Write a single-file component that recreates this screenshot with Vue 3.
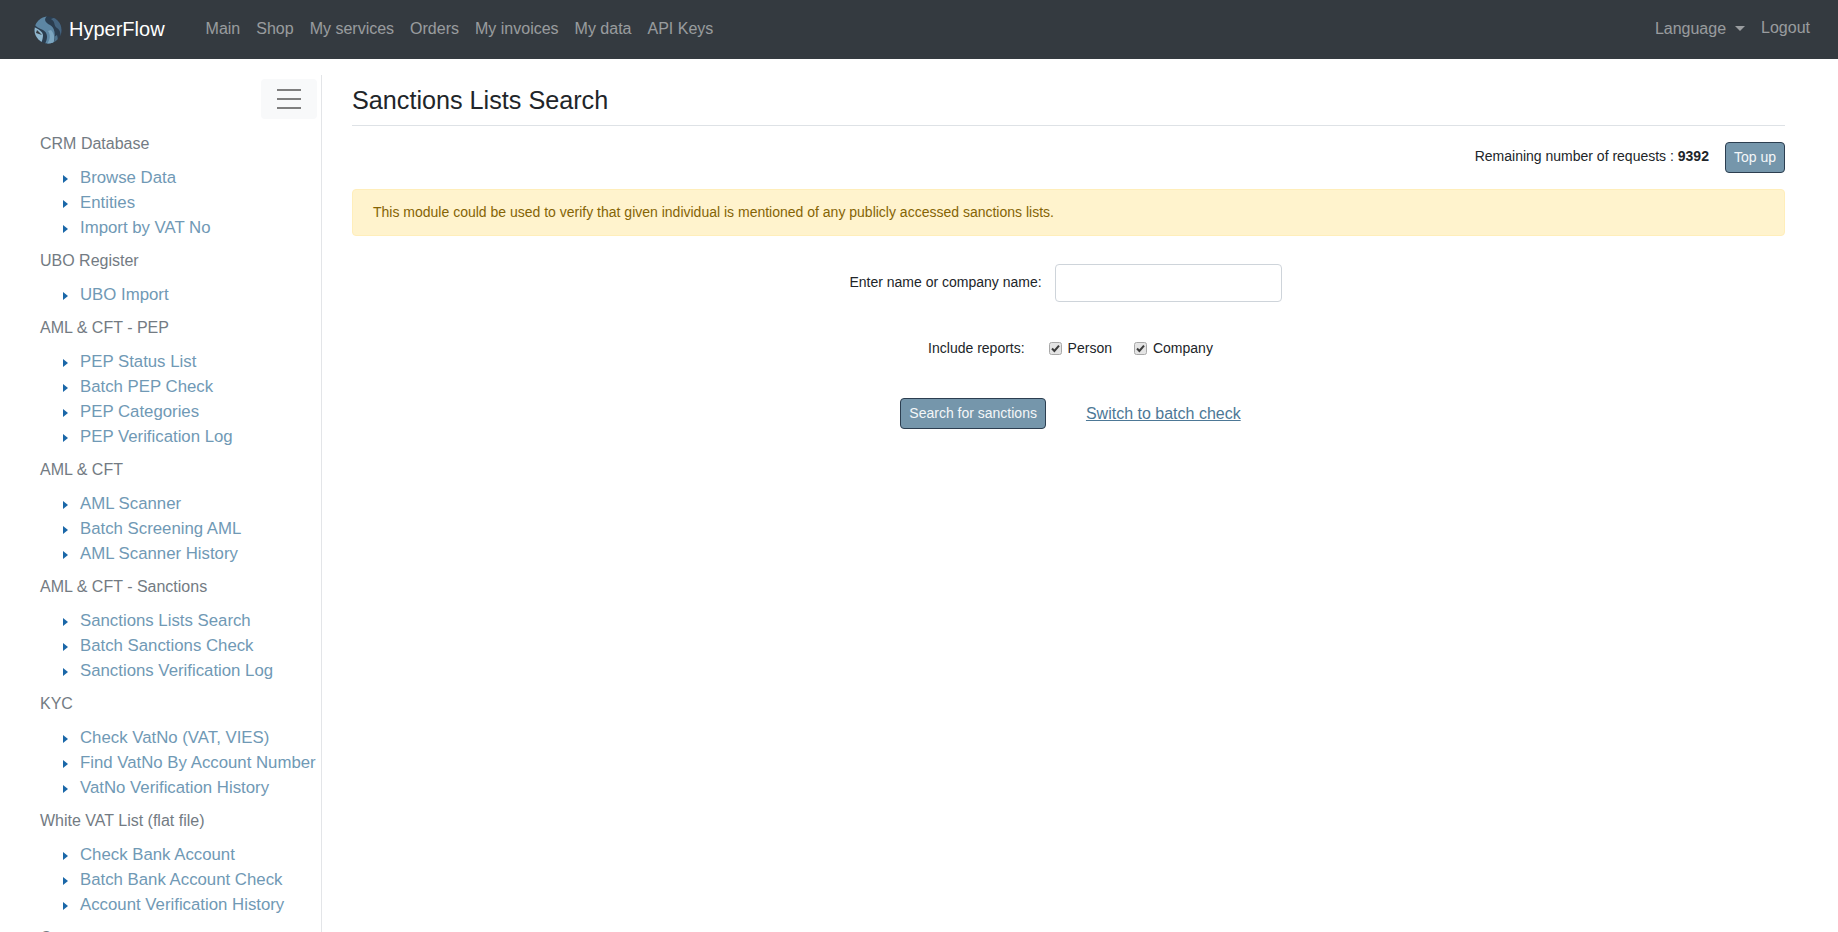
<script setup>
const navLinks = ['Main', 'Shop', 'My services', 'Orders', 'My invoices', 'My data', 'API Keys']
const groups = [
  { title: 'CRM Database', items: ['Browse Data', 'Entities', 'Import by VAT No'] },
  { title: 'UBO Register', items: ['UBO Import'] },
  { title: 'AML & CFT - PEP', items: ['PEP Status List', 'Batch PEP Check', 'PEP Categories', 'PEP Verification Log'] },
  { title: 'AML & CFT', items: ['AML Scanner', 'Batch Screening AML', 'AML Scanner History'] },
  { title: 'AML & CFT - Sanctions', items: ['Sanctions Lists Search', 'Batch Sanctions Check', 'Sanctions Verification Log'] },
  { title: 'KYC', items: ['Check VatNo (VAT, VIES)', 'Find VatNo By Account Number', 'VatNo Verification History'] },
  { title: 'White VAT List (flat file)', items: ['Check Bank Account', 'Batch Bank Account Check', 'Account Verification History'] },
  { title: 'Company', items: [] }
]
const checks = ['Person', 'Company']
</script>

<template>
  <div class="page">
    <nav class="navbar">
      <a class="brand" href="#">
        <svg class="logo" viewBox="0 0 28 28" width="28" height="28">
          <defs><clipPath id="logo-clip"><circle cx="14" cy="14" r="13.5" /></clipPath></defs>
          <g clip-path="url(#logo-clip)">
            <rect width="28" height="28" fill="#2b3d4f" />
            <path d="M0 8 C3 2 8 0 13 0 C9 4 12 7 16 9 C21 12 22 18 19 28 L11 28 C14 22 14 17 9 14 C5 12 2 11 0 8Z" fill="#5d86a3" />
            <path d="M0 11 C4 13 8 15 9 19 C9 22 8 25 7 28 L0 28Z" fill="#8fb6cd" />
            <path d="M14 15 C17 19 16 24 13 28 L19 28 C21 23 21 19 17 14Z" fill="#7ca6c0" />
            <path d="M17 3 C22 6 19 9 23 12 C26 14 27 17 26 23 L28 20 L28 8 L22 1Z" fill="#45647f" />
            <path d="M3 14 L8 19 L2 17Z" fill="#343a40" />
            <path d="M20 21 C21 24 20 26 19 28 L23 28 C24 25 24 22 23 19Z" fill="#4d7089" />
          </g>
        </svg>
        <span>HyperFlow</span>
      </a>
      <ul class="nav-links">
        <li v-for="link in navLinks" :key="link"><a href="#">{{ link }}</a></li>
      </ul>
      <div class="nav-right">
        <a href="#" class="lang">Language<span class="caret"></span></a>
        <a href="#" class="logout">Logout</a>
      </div>
    </nav>

    <div class="body-row">
      <aside class="sidebar">
        <div class="toggle-row">
          <button class="toggle" type="button" aria-label="Toggle menu">
            <span></span><span></span><span></span>
          </button>
        </div>
        <section v-for="g in groups" :key="g.title" class="group">
          <div class="group-title">{{ g.title }}</div>
          <ul>
            <li v-for="item in g.items" :key="item">
              <span class="arrow"></span><a href="#">{{ item }}</a>
            </li>
          </ul>
        </section>
      </aside>

      <main class="content">
        <h1>Sanctions Lists Search</h1>
        <div class="requests">
          <span class="req-text">Remaining number of requests : <b>9392</b></span>
          <button class="btn" type="button">Top up</button>
        </div>
        <div class="alert">This module could be used to verify that given individual is mentioned of any publicly accessed sanctions lists.</div>
        <div class="field-row">
          <label for="q">Enter name or company name:</label>
          <input id="q" type="text" />
        </div>
        <div class="check-row">
          <span class="inc">Include reports:</span>
          <label v-for="c in checks" :key="c" class="check">
            <span class="box">
              <input type="checkbox" checked />
              <svg viewBox="0 0 13 13" width="13" height="13"><path d="M3 6.5 L5.4 9 L10 3.6" fill="none" stroke="#3c3c3c" stroke-width="2" /></svg>
            </span>
            <span>{{ c }}</span>
          </label>
        </div>
        <div class="action-row">
          <button class="btn" type="button">Search for sanctions</button>
          <a href="#" class="switch">Switch to batch check</a>
        </div>
      </main>
    </div>
  </div>
</template>

<style>
html, body { margin: 0; overflow: hidden; }
</style>

<style scoped>
* { box-sizing: border-box; }
.page {
  height: 932px;
  overflow: hidden;
  font-family: "Liberation Sans", Arial, sans-serif;
  font-size: 16px;
  line-height: 1.5;
  color: #212529;
  background: #fff;
}
a { text-decoration: none; }
ul { list-style: none; margin: 0; padding: 0; }

.navbar {
  height: 59px;
  background: #343a40;
  display: flex;
  align-items: center;
  padding: 0 28px 2px 32px;
}
.brand {
  display: flex;
  align-items: center;
  color: #fff;
  font-size: 20px;
  margin-right: 41px;
}
.logo { margin: 2px 7px 0 2px; }
.nav-links { display: flex; gap: 16px; }
.nav-links a, .nav-right a { color: rgba(255, 255, 255, 0.5); }
.nav-right { margin-left: auto; display: flex; gap: 16px; }
.logout { position: relative; top: -1px; }
.caret {
  display: inline-block;
  margin-left: 9px;
  vertical-align: 3px;
  border-top: 5px solid;
  border-left: 5px solid transparent;
  border-right: 5px solid transparent;
}

.body-row { display: flex; padding-top: 16px; }
.sidebar {
  width: 322px;
  flex: none;
  border-right: 1px solid #e3e5e8;
  padding: 4px 4px 0 40px;
  height: 900px;
  overflow: hidden;
}
.toggle-row { display: flex; justify-content: flex-end; margin-bottom: 13px; }
.toggle {
  width: 56px;
  height: 40px;
  background: #f8f9fa;
  border: 0;
  border-radius: 4px;
  padding: 0;
  display: flex;
  flex-direction: column;
  align-items: center;
  justify-content: center;
  gap: 6.67px;
}
.toggle span { width: 24px; height: 2px; background: #7f7f7f; display: block; }
.group { margin-bottom: 9px; }
.group-title { color: #737b83; line-height: 24px; margin-bottom: 9px; }
.group li {
  display: flex;
  align-items: center;
  height: 25px;
  white-space: nowrap;
  padding-left: 23px;
  font-size: 16.8px;
}
.group li a { color: #7099b5; }
.arrow {
  width: 0;
  height: 0;
  margin-right: 12px;
  margin-top: 3px;
  border-left: 5px solid #1a67a8;
  border-top: 4px solid transparent;
  border-bottom: 4px solid transparent;
}

.content { flex: 1; padding: 0 53px 0 30px; min-width: 0; }
h1 {
  margin: 0;
  font-size: 25.2px;
  font-weight: 400;
  line-height: 34px;
  height: 51px;
  padding-top: 8px;
  border-bottom: 1px solid #dee2e6;
}
.requests {
  display: flex;
  justify-content: flex-end;
  align-items: center;
  gap: 16px;
  margin-top: 16px;
  font-size: 14px;
}
.req-text { margin-top: -2px; }
.btn {
  font-family: inherit;
  font-size: 14px;
  line-height: 21px;
  color: #f4f6f8;
  background: #7596ab;
  border: 1px solid #2c3e50;
  border-radius: 4px;
  padding: 4px 8px;
}
.alert {
  margin-top: 16px;
  height: 47px;
  display: flex;
  align-items: center;
  padding: 0 20px;
  font-size: 14px;
  color: #856404;
  background: #fff3cd;
  border: 1px solid #ffeeba;
  border-radius: 4px;
}
.field-row {
  margin-top: 28px;
  display: flex;
  justify-content: center;
  align-items: center;
  font-size: 14px;
  gap: 13px;
  padding-right: 6px;
}
.field-row label { margin-top: -2px; }
.field-row input {
  width: 227px;
  height: 38px;
  border: 1px solid #ced4da;
  border-radius: 4px;
}
.check-row {
  margin-top: 36px;
  display: flex;
  justify-content: center;
  align-items: center;
  font-size: 14px;
  gap: 22px;
  padding-left: 4px;
}
.inc { margin-right: 2px; }
.check { display: flex; align-items: center; gap: 6px; }
.box { position: relative; width: 13px; height: 13px; display: block; }
.box input {
  appearance: none;
  display: block;
  margin: 0;
  width: 13px;
  height: 13px;
  background: #e4e4e4;
  border: 1px solid #a8a8a8;
  border-radius: 2.5px;
}
.box svg { position: absolute; left: 0; top: 0; pointer-events: none; }
.action-row {
  margin-top: 39px;
  display: flex;
  justify-content: center;
  align-items: center;
  gap: 40px;
  padding-left: 4px;
}
.switch { color: #4d7896; text-decoration: underline; }
</style>
